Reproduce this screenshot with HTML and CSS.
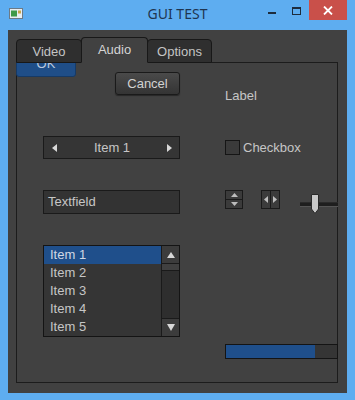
FILE: index.html
```html
<!DOCTYPE html>
<html>
<head>
<meta charset="utf-8">
<link rel="stylesheet" href="styles.css">
</head>
<body>
<div class="window">
  <div class="titlebar">
    <div class="tb-left">
      <svg class="app-icon" width="14" height="11" viewBox="0 0 14 11">
        <rect x="0.5" y="0.5" width="13" height="10" fill="#e8eef2" stroke="#6c7a86"/>
        <rect x="2" y="2.5" width="6" height="6" fill="#3f9a4a"/>
        <rect x="9" y="2.5" width="3" height="3" fill="#c9a54a"/>
      </svg>
    </div>
    <div class="title">GUI TEST</div>
    <div class="tb-right">
      <span class="tb-min"></span>
      <span class="tb-max"></span>
      <span class="tb-close">
        <svg width="10" height="9" viewBox="0 0 10 9"><path d="M1 0.5 L9 8.5 M9 0.5 L1 8.5" stroke="#fff" stroke-width="1.8"/></svg>
      </span>
    </div>
  </div>
  <div class="client">
    <div class="tabs">
      <div class="tab">Video</div>
      <div class="tab active">Audio</div>
      <div class="tab">Options</div>
    </div>
    <div class="panel">
      <button class="ok">OK</button>
      <div class="grid">
        <div class="cell-left">
          <button class="cancel">Cancel</button>
        </div>
        <div class="cell-right">
          <span class="label label-text">Label</span>
        </div>

        <div class="cell-left row2">
          <div class="spinner">
            <svg width="5" height="8" viewBox="0 0 5 8"><path d="M5 0 L0 4 L5 8 Z" fill="#d8d8d8"/></svg>
            <span class="label">Item 1</span>
            <svg width="5" height="8" viewBox="0 0 5 8"><path d="M0 0 L5 4 L0 8 Z" fill="#d8d8d8"/></svg>
          </div>
        </div>
        <div class="cell-right row2 check-row">
          <span class="checkbox"></span>
          <span class="label">Checkbox</span>
        </div>

        <div class="cell-left row3">
          <div class="textfield label">Textfield</div>
        </div>
        <div class="cell-right row3 controls">
          <div class="vspin">
            <span class="vspin-btn"><svg width="7" height="4" viewBox="0 0 7 4"><path d="M0 4 L3.5 0 L7 4 Z" fill="#bdbdbd"/></svg></span>
            <span class="vspin-btn"><svg width="7" height="4" viewBox="0 0 7 4"><path d="M0 0 L3.5 4 L7 0 Z" fill="#bdbdbd"/></svg></span>
          </div>
          <div class="hspin">
            <span class="hspin-btn"><svg width="4" height="7" viewBox="0 0 4 7"><path d="M4 0 L0 3.5 L4 7 Z" fill="#bdbdbd"/></svg></span>
            <span class="hspin-btn"><svg width="4" height="7" viewBox="0 0 4 7"><path d="M0 0 L4 3.5 L0 7 Z" fill="#bdbdbd"/></svg></span>
          </div>
          <div class="slider">
            <div class="slider-track"></div>
            <svg class="slider-thumb" width="8" height="20" viewBox="0 0 8 20"><path d="M0.5 0.5 H7.5 V15 L4 19.5 L0.5 15 Z" fill="#c9c9c9" stroke="#2a2a2a"/></svg>
          </div>
        </div>

        <div class="cell-left row4">
          <div class="listbox">
            <div class="items">
              <div class="item selected label">Item 1</div>
              <div class="item label">Item 2</div>
              <div class="item label">Item 3</div>
              <div class="item label">Item 4</div>
              <div class="item label">Item 5</div>
            </div>
            <div class="scrollbar">
              <span class="sb-btn"><svg width="8" height="6" viewBox="0 0 8 6"><path d="M0 6 L4 0 L8 6 Z" fill="#d8d8d8"/></svg></span>
              <span class="sb-thumb"></span>
              <span class="sb-space"></span>
              <span class="sb-btn"><svg width="8" height="7" viewBox="0 0 8 7"><path d="M0 0 L4 7 L8 0 Z" fill="#d8d8d8"/></svg></span>
            </div>
          </div>
        </div>
        <div class="cell-right row4 progress-cell">
          <div class="progress"><div class="progress-fill" style="width: 80%"></div></div>
        </div>
      </div>
    </div>
  </div>
</div>
</body>
</html>
```

FILE: styles.css
```css
html, body {
  margin: 0;
  padding: 0;
}
body {
  width: 355px;
  height: 400px;
  background: #5eadf0;
  font-family: "Liberation Sans", Arial, sans-serif;
  font-size: 13px;
  overflow: hidden;
}
.window {
  width: 355px;
  height: 400px;
  display: flex;
  flex-direction: column;
}
.titlebar {
  height: 30px;
  display: grid;
  grid-template-columns: 1fr auto 1fr;
  align-items: start;
}
.tb-left {
  padding: 8px 0 0 9px;
}
.app-icon {
  display: block;
}
.title {
  font-family: "Noto Sans", "Open Sans", sans-serif;
  font-size: 14px;
  color: #1f3550;
  line-height: 28px;
}
.tb-right {
  display: flex;
  justify-content: flex-end;
  align-items: flex-start;
  padding-right: 8px;
}
.tb-min {
  width: 8px;
  height: 2px;
  background: #1d2c3d;
  margin-top: 12px;
  margin-right: 16px;
}
.tb-max {
  width: 7px;
  height: 5px;
  border: 1px solid #1d2c3d;
  border-top-width: 2px;
  margin-top: 7px;
  margin-right: 8px;
}
.tb-close {
  width: 38px;
  height: 20px;
  background: #c9504a;
  display: flex;
  align-items: center;
  justify-content: center;
}
.tb-close svg {
  display: block;
}

.client {
  margin: 0 8px;
  height: 363px;
  background: #414141;
  box-sizing: border-box;
  padding: 7px 9px 10px 8px;
  display: flex;
  flex-direction: column;
}
.tabs {
  display: flex;
  align-items: flex-end;
  height: 25px;
  position: relative;
  z-index: 2;
}
.tab {
  box-sizing: border-box;
  width: 66px;
  height: 24px;
  background: #2f2f2f;
  border: 1px solid #181818;
  border-radius: 4px 4px 0 0;
  color: #c4c4c4;
  text-align: center;
  line-height: 24px;
  font-size: 13px;
  margin-bottom: -1px;
}
.tab.active {
  height: 26px;
  background: #414141;
  border-bottom-color: #414141;
  color: #d4d4d4;
  line-height: 24px;
  z-index: 1;
  margin-left: -1px;
  margin-right: -1px;
  width: 67px;
}
.tab:last-child {
  width: 65px;
}
.panel {
  flex: 1;
  border: 1px solid #1c1c1c;
  position: relative;
  background: #414141;
}
.ok {
  position: absolute;
  left: -1px;
  top: -13px;
  width: 60px;
  height: 27px;
  background: #1f4e88;
  border: 1px solid #163a66;
  border-radius: 3px;
  color: #b9c9de;
  font-family: "Liberation Sans", Arial, sans-serif;
  font-size: 13px;
  padding: 0;
  z-index: 1;
}
.grid {
  display: grid;
  column-gap: 45px;
  padding: 9px 0 0 26px;
  grid-template-columns: 137px 113px;
}
.label {
  color: #c6c6c6;
  font-size: 13px;
}
.cell-left, .cell-right {
  display: flex;
}
.cancel {
  margin-left: 72px;
  width: 68px;
  height: 23px;
  background: linear-gradient(#4a4a4a, #343434);
  border: 1px solid #1a1a1a;
  border-radius: 3px;
  color: #d2d2d2;
  font-family: "Liberation Sans", Arial, sans-serif;
  font-size: 13px;
  padding: 0;
  box-shadow: 0 1px 1px rgba(0,0,0,0.4);
}
.label-text {
  margin-top: 16px;
  line-height: 15px;
}
.row2 {
  margin-top: 33px;
}
.spinner {
  box-sizing: border-box;
  width: 137px;
  height: 23px;
  background: #353535;
  border: 1px solid #1a1a1a;
  display: flex;
  align-items: center;
  justify-content: space-between;
  padding: 0 7px 0 8px;
}
.spinner svg {
  display: block;
}
.check-row {
  align-items: center;
  gap: 3px;
}
.checkbox {
  box-sizing: border-box;
  width: 15px;
  height: 15px;
  background: #3a3a3a;
  border: 1px solid #151515;
}
.row3 {
  margin-top: 31px;
}
.textfield {
  box-sizing: border-box;
  width: 137px;
  height: 24px;
  background: #333333;
  border: 1px solid #1a1a1a;
  line-height: 22px;
  padding-left: 4px;
}
.controls {
  align-items: flex-start;
}
.vspin {
  box-sizing: border-box;
  width: 18px;
  height: 19px;
  display: flex;
  flex-direction: column;
  border: 1px solid #1a1a1a;
  background: #1a1a1a;
  gap: 1px;
}
.vspin-btn {
  flex: 1;
  background: #3b3b3b;
  display: flex;
  align-items: center;
  justify-content: center;
}
.vspin-btn svg, .hspin-btn svg {
  display: block;
}
.hspin {
  box-sizing: border-box;
  width: 19px;
  height: 19px;
  display: flex;
  border: 1px solid #1a1a1a;
  background: #1a1a1a;
  gap: 1px;
  margin-left: 18px;
}
.hspin-btn {
  flex: 1;
  background: #3b3b3b;
  display: flex;
  align-items: center;
  justify-content: center;
}
.slider {
  position: relative;
  width: 38px;
  height: 20px;
  margin-left: 20px;
  margin-top: 4px;
}
.slider-track {
  position: absolute;
  left: 0;
  right: 0;
  top: 8px;
  height: 3px;
  background: #1e1e1e;
  border-top: 1px solid #2a2a2a;
  border-bottom: 1px solid #555;
}
.slider-thumb {
  position: absolute;
  left: 11px;
  top: 0;
  display: block;
}
.row4 {
  margin-top: 31px;
}
.listbox {
  box-sizing: border-box;
  width: 137px;
  height: 92px;
  border: 1px solid #141414;
  background: #353535;
  display: flex;
}
.items {
  flex: 1;
}
.item {
  height: 18px;
  line-height: 18px;
  padding-left: 6px;
}
.item.selected {
  background: #1f4f8b;
  color: #d0d8e4;
}
.scrollbar {
  width: 17px;
  border-left: 1px solid #1a1a1a;
  display: flex;
  flex-direction: column;
  background: #2e2e2e;
}
.sb-btn {
  height: 17px;
  background: #3c3c3c;
  display: flex;
  align-items: center;
  justify-content: center;
  border-bottom: 1px solid #1a1a1a;
}
.sb-btn:last-child {
  border-bottom: none;
  border-top: 1px solid #1a1a1a;
}
.sb-thumb {
  height: 6px;
  background: #404040;
  border-bottom: 1px solid #1a1a1a;
}
.sb-space {
  flex: 1;
}
.progress-cell {
  align-items: flex-start;
}
.progress {
  box-sizing: border-box;
  margin-top: 99px;
  width: 113px;
  height: 15px;
  background: #353535;
  border: 1px solid #141414;
  overflow: hidden;
}
.progress-fill {
  height: 100%;
  background: #1f4f8b;
}
```
